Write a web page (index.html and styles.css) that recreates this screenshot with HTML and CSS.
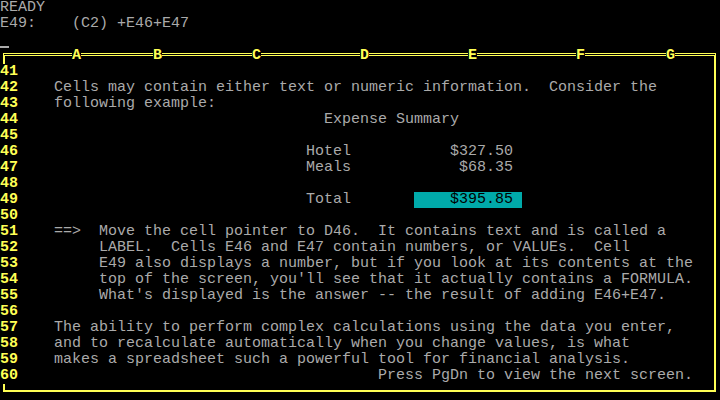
FILE: index.html
```html
<!DOCTYPE html>
<html lang="en">
<head>
    <meta charset="UTF-8">
    <title>1-2-3 Tutorial</title>
    <link rel="stylesheet" href="styles.css">
</head>
<body>

    <div class="screen">
        <!-- Control panel -->
        <div class="line">READY</div>
        <div class="line">E49:    (C2) +E46+E47</div>
        <div class="line cursor-line"><span class="cursor"></span></div>

        <!-- Worksheet frame -->
        <div class="ruler">
            <span class="corner-left"></span>
            <span class="rule"></span><span class="col">A</span>
            <span class="rule"></span><span class="col">B</span>
            <span class="rule"></span><span class="col">C</span>
            <span class="rule"></span><span class="col">D</span>
            <span class="rule"></span><span class="col">E</span>
            <span class="rule"></span><span class="col">F</span>
            <span class="rule"></span><span class="col">G</span>
            <span class="rule"></span>
            <span class="corner-right"></span>
        </div>
<pre class="rows"><span class="num">41</span>
<span class="num">42</span>    Cells may contain either text or numeric information.  Consider the
<span class="num">43</span>    following example:
<span class="num">44</span>                                  Expense Summary
<span class="num">45</span>
<span class="num">46</span>                                Hotel           $327.50
<span class="num">47</span>                                Meals            $68.35
<span class="num">48</span>
<span class="num">49</span>                                Total       <span class="pointer">    $395.85 </span>
<span class="num">50</span>
<span class="num">51</span>    ==&gt;  Move the cell pointer to D46.  It contains text and is called a
<span class="num">52</span>         LABEL.  Cells E46 and E47 contain numbers, or VALUEs.  Cell
<span class="num">53</span>         E49 also displays a number, but if you look at its contents at the
<span class="num">54</span>         top of the screen, you'll see that it actually contains a FORMULA.
<span class="num">55</span>         What's displayed is the answer -- the result of adding E46+E47.
<span class="num">56</span>
<span class="num">57</span>    The ability to perform complex calculations using the data you enter,
<span class="num">58</span>    and to recalculate automatically when you change values, is what
<span class="num">59</span>    makes a spreadsheet such a powerful tool for financial analysis.
<span class="num">60</span>                                        Press PgDn to view the next screen.</pre>
        <div class="foot"></div>
    </div>

</body>
</html>
```

FILE: styles.css
```css
body {
    margin: 0;
    background-color: #000;
}
.screen {
    width: 720px;
    height: 400px;
    overflow: hidden;
    background-color: #000;
    color: #aaaaaa;
    font-family: "Liberation Mono", "DejaVu Sans Mono", monospace;
    font-size: 15px;
    line-height: 16px;
}
.line {
    height: 16px;
    white-space: pre;
}
.cursor-line {
    box-sizing: border-box;
    padding-top: 14px;
}
.cursor {
    display: block;
    width: 9px;
    height: 2px;
    background-color: #aaaaaa;
}

/* Column letters on the double rule */
.ruler {
    display: grid;
    grid-template-columns: 9px 63px 9px 72px 9px 90px 9px 99px 9px 99px 9px 99px 9px 81px 9px 36px 9px;
    height: 16px;
    color: #ffff55;
    font-weight: bold;
}
.rule {
    align-self: start;
    height: 0;
    margin-top: 5px;
    border-top: 3px double #ffff55;
}
.col {
    text-align: center;
}
.corner-left {
    align-self: start;
    box-sizing: border-box;
    width: 6px;
    height: 11px;
    margin-top: 5px;
    margin-left: 3px;
    border-top: 3px double #ffff55;
    border-left: 2px solid #ffff55;
}
.corner-right {
    align-self: start;
    box-sizing: border-box;
    width: 5px;
    height: 11px;
    margin-top: 5px;
    border-top: 3px double #ffff55;
    border-right: 2px solid #ffff55;
}

.rows {
    box-sizing: border-box;
    width: 716px;
    height: 320px;
    margin: 0;
    border-right: 2px solid #ffff55;
    font: inherit;
    white-space: pre;
}
.num {
    color: #ffff55;
    font-weight: bold;
}
.pointer {
    display: inline-block;
    height: 16px;
    background-color: #00aaaa;
    color: #000;
    vertical-align: top;
}
.foot {
    box-sizing: border-box;
    width: 713px;
    height: 8px;
    margin-left: 3px;
    border-left: 2px solid #ffff55;
    border-right: 2px solid #ffff55;
    border-bottom: 2px solid #ffff55;
}
```
